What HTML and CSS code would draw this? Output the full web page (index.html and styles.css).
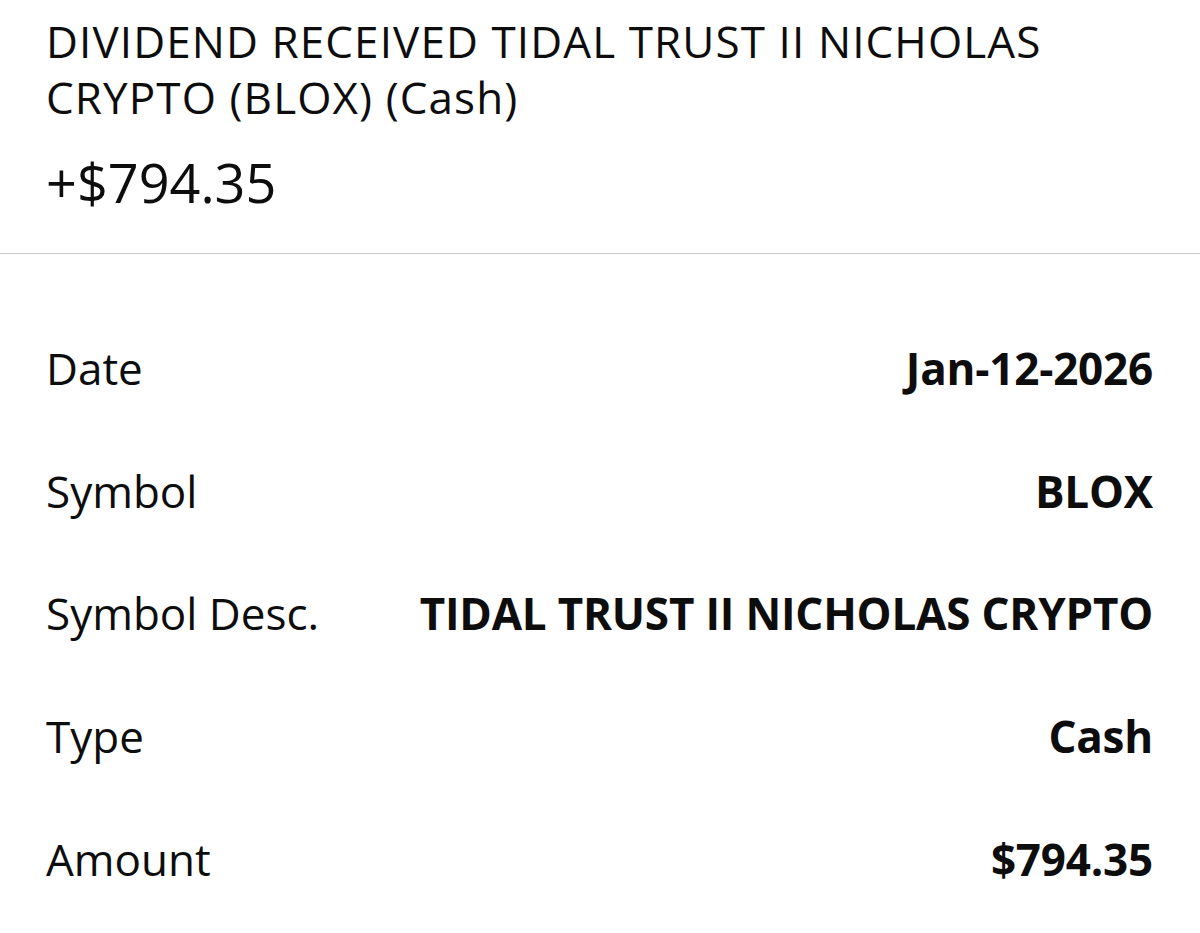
FILE: index.html
```html
<!DOCTYPE html>
<html>
<head>
<meta charset="utf-8">
<link rel="stylesheet" href="styles.css">
</head>
<body>
<div class="page">
  <header class="header">
    <h1 class="title">DIVIDEND RECEIVED TIDAL TRUST II NICHOLAS CRYPTO (BLOX) (Cash)</h1>
    <div class="total">+$794.35</div>
  </header>
  <div class="divider"></div>
  <dl class="details">
    <div class="row"><dt class="label">Date</dt><dd class="value">Jan-12-2026</dd></div>
    <div class="row"><dt class="label">Symbol</dt><dd class="value">BLOX</dd></div>
    <div class="row"><dt class="label">Symbol Desc.</dt><dd class="value">TIDAL TRUST II NICHOLAS CRYPTO</dd></div>
    <div class="row"><dt class="label">Type</dt><dd class="value">Cash</dd></div>
    <div class="row"><dt class="label">Amount</dt><dd class="value">$794.35</dd></div>
  </dl>
</div>
</body>
</html>
```
FILE: styles.css
```css
* { box-sizing: border-box; }
html, body { margin: 0; padding: 0; background: #fff; }
body {
  font-family: "Open Sans", "Noto Sans", sans-serif;
  color: #0d0d0d;
  width: 1200px;
  height: 933px;
  overflow: hidden;
}
.header {
  padding: 13px 46px 0 46px;
  height: 253px;
}
.title {
  margin: 0;
  font-size: 44px;
  font-weight: 400;
  line-height: 56px;
  letter-spacing: 1.1px;
}
.total {
  margin-top: 27px;
  font-size: 54px;
  line-height: 60px;
}
.divider {
  height: 1px;
  background: #c8c8c8;
}
.details {
  margin: 0;
  padding: 53px 47px 0 46px;
}
.row {
  display: flex;
  justify-content: space-between;
  align-items: center;
  height: 122.6px;
}
.label {
  font-size: 44px;
  font-weight: 400;
}
.value {
  margin: 0;
  font-size: 44px;
  font-weight: 700;
  letter-spacing: -0.2px;
}
```
